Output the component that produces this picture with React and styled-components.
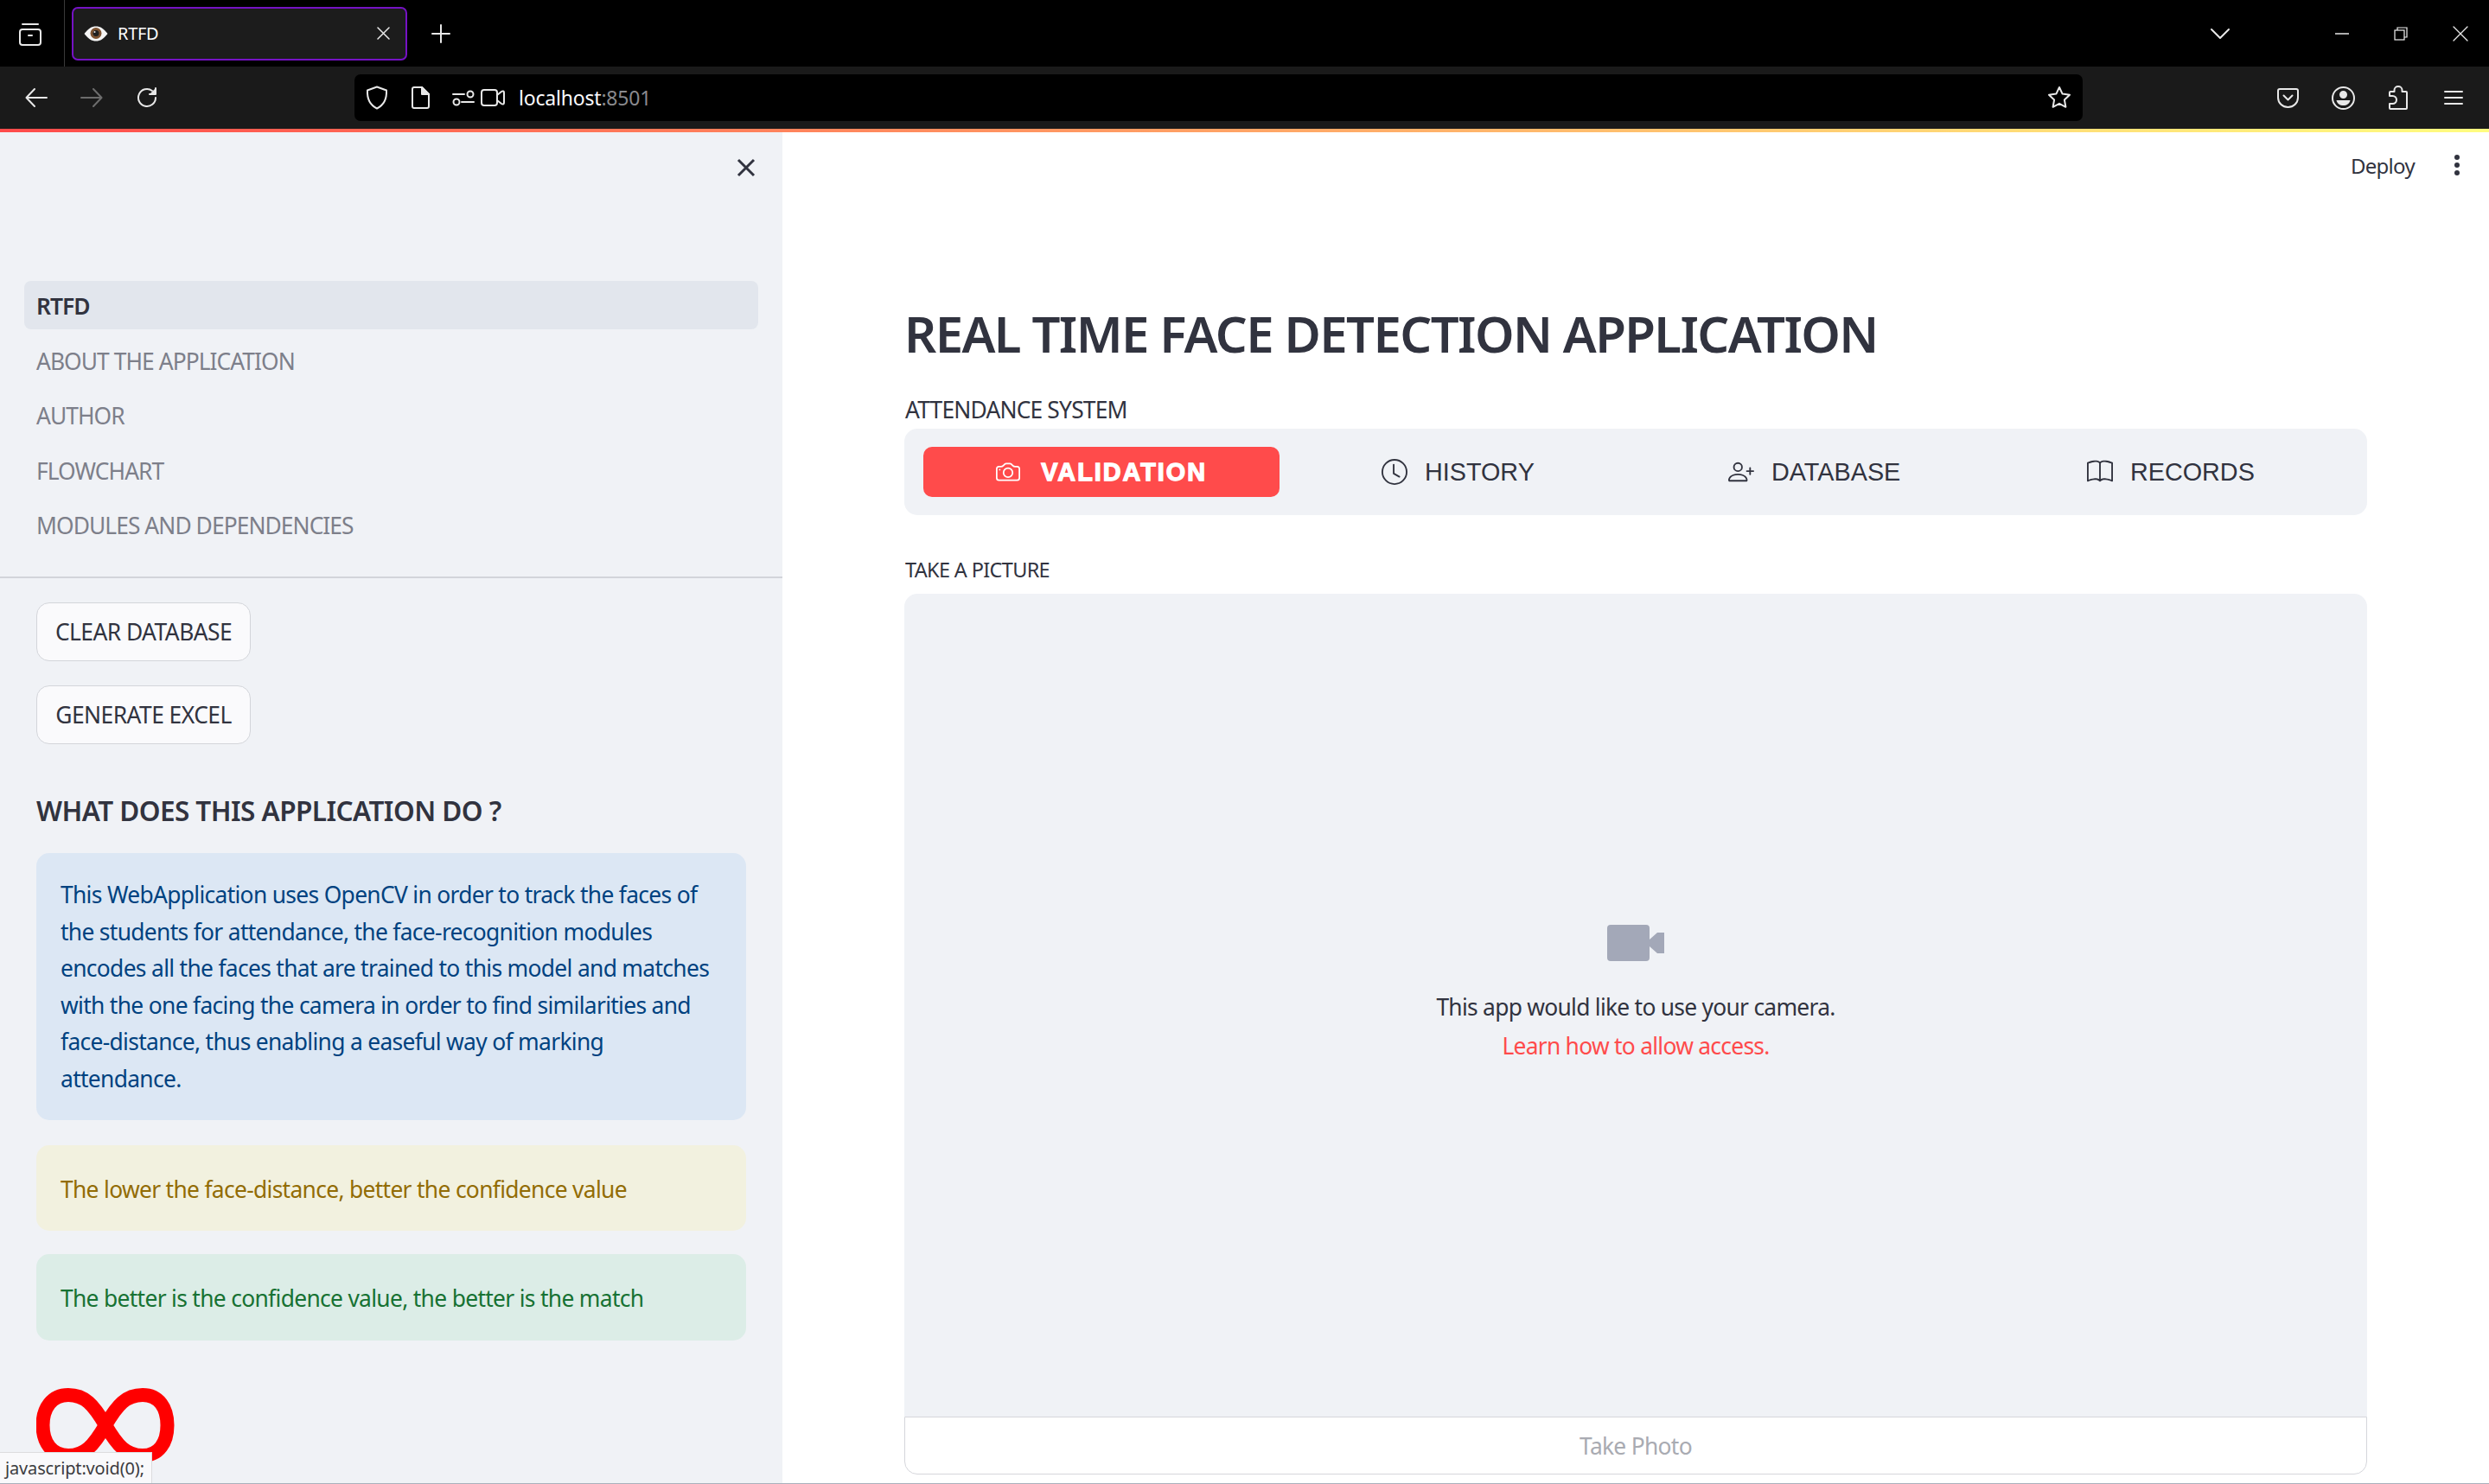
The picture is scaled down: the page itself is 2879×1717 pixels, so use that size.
import React from 'react';
import styled, { createGlobalStyle } from 'styled-components';
import { BsCamera, BsClock, BsPersonPlus, BsBook } from 'react-icons/bs';

const UI = `"Noto Sans", "Open Sans", sans-serif`;
const ARIAL = `"Liberation Sans", Arial, sans-serif`;

const Global = createGlobalStyle`
  html, body { margin: 0; padding: 0; background: #fff; overflow: hidden; }
  * { box-sizing: border-box; }
  #root { width: 2879px; height: 1717px; }
`;

const Shell = styled.div`
  position: relative;
  width: 2879px;
  height: 1717px;
  display: flex;
  flex-direction: column;
  overflow: hidden;
  font-family: ${UI};
  color: #31333f;
  border-bottom: 1px solid #aab0bb;
`;

/* browser chrome */
const TabStrip = styled.div`
  height: 77px;
  flex: none;
  background: #000;
  display: flex;
  align-items: center;
  color: #e8e8e8;
  padding-right: 24px;
`;
const TabListBtn = styled.div`
  width: 75px;
  height: 77px;
  padding-right: 4px;
  display: flex;
  align-items: center;
  justify-content: center;
  border-right: 1px solid #3a3a3a;
`;
const Tab = styled.div`
  width: 388px;
  height: 62px;
  margin-left: 8px;
  padding: 0 18px 0 12px;
  display: flex;
  align-items: center;
  background: #1c1c1c;
  border: 2px solid #7512c4;
  border-radius: 7px;
`;
const TabTitle = styled.span`
  flex: 1;
  margin-left: 11px;
  font-size: 20px;
  letter-spacing: -0.3px;
  color: #fbfbfe;
`;
const StripSpacer = styled.div`
  flex: 1;
`;
const StripIcon = styled.div`
  display: flex;
  align-items: center;
  justify-content: center;
  margin-left: ${p => p.$ml || 0}px;
  width: ${p => p.$w || 24}px;
`;
const NavBar = styled.div`
  height: 72px;
  flex: none;
  background: #1a1a1a;
  display: flex;
  align-items: center;
  padding-left: 28px;
  color: #e8e8e8;
`;
const NavIcon = styled.div`
  display: flex;
  width: 28px;
  margin-right: ${p => p.$mr || 0}px;
  margin-left: ${p => p.$ml || 0}px;
  justify-content: center;
  opacity: ${p => (p.$dim ? 0.4 : 1)};
`;
const UrlBar = styled.div`
  width: 1999px;
  height: 54px;
  margin-left: 226px;
  background: #000;
  border-radius: 7px;
  display: flex;
  align-items: center;
  padding: 0 13px 0 12px;
`;
const UrlText = styled.div`
  flex: 1;
  margin-left: 16px;
  font-size: 23px;
  letter-spacing: -0.2px;
  color: #fbfbfe;
  span { color: #8a8a8e; }
`;
const Rainbow = styled.div`
  height: 4px;
  flex: none;
  background: linear-gradient(90deg, #ff4b4b, #fffd80);
`;

/* streamlit page */
const Body = styled.div`
  flex: 1;
  min-height: 0;
  display: flex;
`;
const Sidebar = styled.aside`
  width: 905px;
  flex: none;
  background: #f0f2f6;
  overflow: hidden;
`;
const SideTop = styled.div`
  height: 172px;
  padding: 30px 31px 0 0;
  display: flex;
  justify-content: flex-end;
  align-items: flex-start;
`;
const PageNav = styled.nav`
  padding: 0 28px 32px;
  border-bottom: 2px solid #d2d4da;
  display: flex;
  flex-direction: column;
  gap: 7.5px;
`;
const PageLink = styled.div`
  height: 56px;
  padding: 2px 0 0 14px;
  display: flex;
  align-items: center;
  border-radius: 8px;
  font-size: 26.4px;
  letter-spacing: -0.95px;
  background: ${p => (p.$active ? '#e2e6ed' : 'transparent')};
  color: ${p => (p.$active ? '#31333f' : '#7d7f8a')};
  font-weight: ${p => (p.$active ? 600 : 400)};
`;
const SideBody = styled.div`
  padding: 28px 42px 0;
`;
const SideButton = styled.div`
  width: 248px;
  height: 68px;
  margin-bottom: 28px;
  display: flex;
  align-items: center;
  justify-content: center;
  background: #fafafc;
  border: 1.5px solid #d3d5da;
  border-radius: 15px;
  font-size: 26.4px;
  letter-spacing: -0.55px;
  white-space: nowrap;
`;
const SideHeading = styled.h3`
  margin: 52px 0 24px;
  height: 50px;
  line-height: 50px;
  font-size: 31.5px;
  font-weight: 600;
  letter-spacing: -0.55px;
  white-space: nowrap;
`;
const Alert = styled.div`
  height: ${p => p.$h}px;
  margin-bottom: ${p => p.$mb}px;
  padding: ${p => p.$top}px 28px 0;
  border-radius: 15px;
  font-size: 26.4px;
  letter-spacing: -0.68px;
  line-height: 42.6px;
  background: ${p => p.$bg};
  color: ${p => p.$fg};
`;
const LogoWrap = styled.div`
  margin-top: 54px;
  height: 88px;
  svg { display: block; }
`;
const StatusTip = styled.div`
  position: absolute;
  left: 0;
  bottom: 0;
  width: 176px;
  height: 36px;
  padding-left: 6px;
  display: flex;
  align-items: center;
  background: #f9f9fb;
  border: 1px solid #dcdcde;
  border-left: none;
  border-bottom: none;
  font-size: 20px;
  letter-spacing: -0.15px;
  color: #3c3c40;
  white-space: nowrap;
`;

const Main = styled.main`
  flex: 1;
  min-width: 0;
  background: #fff;
`;
const MainHead = styled.div`
  height: 76px;
  display: flex;
  align-items: center;
  justify-content: flex-end;
  padding-right: 34px;
`;
const Deploy = styled.div`
  font-size: 24px;
  letter-spacing: -0.7px;
  margin-right: 46px;
`;
const Kebab = styled.div`
  display: flex;
  flex-direction: column;
  gap: 3px;
  i { width: 6px; height: 6px; border-radius: 50%; background: #31333f; display: block; }
`;
const Content = styled.div`
  padding: 119px 141px 0;
`;
const Title = styled.h1`
  margin: 0 0 30px;
  height: 76px;
  line-height: 76px;
  font-size: 58px;
  font-weight: 600;
  letter-spacing: -1.6px;
  white-space: nowrap;
`;
const FieldLabel = styled.div`
  height: ${p => p.$h}px;
  line-height: ${p => p.$h}px;
  font-size: ${p => p.$size}px;
  letter-spacing: ${p => p.$ls}px;
  padding-left: 1px;
`;
const OptionMenu = styled.div`
  margin-top: 2px;
  height: 100px;
  padding: 21px 21px 0 22px;
  display: grid;
  grid-template-columns: repeat(4, 1fr);
  align-content: start;
  background: #f0f2f6;
  border-radius: 15px;
  margin-bottom: 45px;
`;
const OptionItem = styled.div`
  height: 58px;
  display: flex;
  align-items: center;
  justify-content: center;
  gap: ${p => (p.$active ? 24 : 20)}px;
  border-radius: 10px;
  font-family: ${ARIAL};
  font-size: 28.8px;
  font-weight: ${p => (p.$active ? 700 : 400)};
  letter-spacing: ${p => (p.$active ? 2 : 0)}px;
  -webkit-text-stroke: ${p => (p.$active ? '1.3px #fff' : '0')};
  background: ${p => (p.$active ? '#ff4b4b' : 'transparent')};
  color: ${p => (p.$active ? '#fff' : '#31333f')};
  svg { -webkit-text-stroke: 0; }
`;
const CameraBox = styled.div`
  margin-top: 10px;
  height: 952px;
  padding-bottom: 26px;
  display: flex;
  flex-direction: column;
  align-items: center;
  justify-content: center;
  background: #f0f2f6;
  border-radius: 15px 15px 0 0;
`;
const CameraText = styled.div`
  margin-top: ${p => p.$mt}px;
  height: 40px;
  line-height: 40px;
  font-size: 26.4px;
  letter-spacing: -0.73px;
  color: ${p => p.$color};
`;
const TakePhoto = styled.div`
  height: 67px;
  display: flex;
  align-items: center;
  justify-content: center;
  background: #fff;
  border: 1.5px solid #d5d6db;
  border-radius: 0 0 15px 15px;
  font-size: 26.4px;
  letter-spacing: -0.7px;
  color: #a9abb2;
`;

const Stroke = ({ w, h = w, vb, children, sw = 2 }) => (
  <svg width={w} height={h} viewBox={vb} fill="none" stroke="currentColor" strokeWidth={sw} strokeLinecap="round" strokeLinejoin="round">
    {children}
  </svg>
);

const pages = ['RTFD', 'ABOUT THE APPLICATION', 'AUTHOR', 'FLOWCHART', 'MODULES AND DEPENDENCIES'];
const options = [
  { label: 'VALIDATION', Icon: BsCamera, active: true },
  { label: 'HISTORY', Icon: BsClock },
  { label: 'DATABASE', Icon: BsPersonPlus },
  { label: 'RECORDS', Icon: BsBook },
];

export default function App() {
  return (
    <Shell>
      <Global />
      <TabStrip>
        <TabListBtn>
          <Stroke w={28} vb="0 0 28 28">
            <rect x="2" y="9" width="24" height="18" rx="3" />
            <path d="M5 3h18" />
            <path d="M12 16h4" />
          </Stroke>
        </TabListBtn>
        <Tab>
          <svg width="28" height="18" viewBox="0 0 28 18">
            <path d="M0.500 9C5 3 9 0.500 14 0.500S23 3 27.500 9C23 15 19 17.500 14 17.500S5 15 0.500 9z" fill="#f4f4f4" />
            <circle cx="14" cy="8.500" r="6.500" fill="#7d5230" />
            <circle cx="14" cy="8.500" r="3.500" fill="#1f1f1f" />
            <circle cx="12.500" cy="7" r="1" fill="#e8e8e8" />
          </svg>
          <TabTitle>RTFD</TabTitle>
          <Stroke w={15} vb="0 0 15 15" sw={1.5}><path d="M1 1l13 13M14 1L1 14" /></Stroke>
        </Tab>
        <StripIcon $ml={28} $w={22}>
          <Stroke w={22} vb="0 0 22 22"><path d="M11 1v20M1 11h20" /></Stroke>
        </StripIcon>
        <StripSpacer />
        <StripIcon $w={22}>
          <Stroke w={22} vb="0 0 22 12"><path d="M1 1l10 10L21 1" /></Stroke>
        </StripIcon>
        <StripIcon $ml={122} $w={16}>
          <Stroke w={16} vb="0 0 16 2" h={2} sw={1.3}><path d="M0 1h16" /></Stroke>
        </StripIcon>
        <StripIcon $ml={52} $w={16}>
          <svg width="16" height="16" viewBox="0 0 16 16" fill="none" stroke="#f0f0f0" strokeWidth="1.2">
            <rect x="1" y="4" width="11" height="11" />
            <path d="M4 4V1h11v11h-3" />
          </svg>
        </StripIcon>
        <StripIcon $ml={52} $w={18}>
          <Stroke w={18} vb="0 0 18 18" sw={1.3}><path d="M1 1l16 16M17 1L1 17" /></Stroke>
        </StripIcon>
      </TabStrip>

      <NavBar>
        <NavIcon $mr={36}>
          <Stroke w={26} vb="0 0 26 24"><path d="M25 12H2M11 2L1.5 12 11 22" /></Stroke>
        </NavIcon>
        <NavIcon $mr={36} $dim>
          <Stroke w={26} vb="0 0 26 24"><path d="M1 12h23M15 2l9.5 10L15 22" /></Stroke>
        </NavIcon>
        <NavIcon>
          <Stroke w={26} vb="0 0 26 26">
            <path d="M23 13a10 10 0 1 1-4-8" />
            <path d="M23 2v7h-7" fill="currentColor" />
          </Stroke>
        </NavIcon>
        <UrlBar>
          <NavIcon>
            <Stroke w={26} h={28} vb="0 0 26 28"><path d="M13 1.500l11 4c.5 9-2 16.500-11 21C4 22 1.500 14.500 2 5.500z" /></Stroke>
          </NavIcon>
          <NavIcon $ml={22}>
            <Stroke w={22} h={26} vb="0 0 22 26">
              <path d="M2 3a2 2 0 0 1 2-2h9l8 8v14a2 2 0 0 1-2 2H4a2 2 0 0 1-2-2z" />
              <path d="M13 1l8 8h-8z" fill="currentColor" />
            </Stroke>
          </NavIcon>
          <NavIcon $ml={22}>
            <Stroke w={26} h={19} vb="0 0 26 19">
              <circle cx="21" cy="5" r="3.500" />
              <path d="M1 5h13" />
              <circle cx="5" cy="14" r="3.500" />
              <path d="M11 14h14" />
            </Stroke>
          </NavIcon>
          <NavIcon $ml={6}>
            <Stroke w={28} h={20} vb="0 0 28 20">
              <rect x="1" y="1" width="18" height="18" rx="3" />
              <path d="M19 7l5-4c1.500-1 3-.5 3 1v12c0 1.500-1.500 2-3 1l-5-4" />
            </Stroke>
          </NavIcon>
          <UrlText>localhost<span>:8501</span></UrlText>
          <Stroke w={28} vb="0 0 28 28">
            <path d="M14 2l3.600 7.600 8.400 1.100-6.100 5.800 1.500 8.300L14 20.800l-7.400 4 1.500-8.300L2 10.700l8.400-1.100z" />
          </Stroke>
        </UrlBar>
        <NavIcon $ml={223}>
          <Stroke w={25} h={23} vb="0 0 25 23">
            <path d="M3 1h19a2 2 0 0 1 2 2v8c0 6-5 11-11.500 11S1 17 1 11V3a2 2 0 0 1 2-2z" />
            <path d="M7.500 8.500l5 5 5-5" />
          </Stroke>
        </NavIcon>
        <NavIcon $ml={36}>
          <Stroke w={27} vb="0 0 27 27">
            <circle cx="13.500" cy="13.500" r="12.500" />
            <circle cx="13.500" cy="9.500" r="3.500" fill="currentColor" />
            <path d="M5.500 16h16c-1 4-4 6-8 6s-7-2-8-6z" fill="currentColor" stroke="none" />
          </Stroke>
        </NavIcon>
        <NavIcon $ml={36}>
          <Stroke w={24} h={28} vb="0 0 24 28">
            <path d="M3 7h4.500V5a4.500 4 0 0 1 9 0v2H21a1 1 0 0 1 1 1v18a1 1 0 0 1-1 1H3a1 1 0 0 1-1-1v-5h3.500a4.500 4.500 0 0 0 0-9H2V8a1 1 0 0 1 1-1z" />
          </Stroke>
        </NavIcon>
        <NavIcon $ml={36}>
          <Stroke w={22} h={18} vb="0 0 22 18"><path d="M1 2h20M1 9h20M1 16h20" /></Stroke>
        </NavIcon>
      </NavBar>
      <Rainbow />

      <Body>
        <Sidebar>
          <SideTop>
            <svg width="22" height="22" viewBox="0 0 22 22" fill="none" stroke="#31333f" strokeWidth="3"><path d="M2 2l18 18M20 2L2 20" /></svg>
          </SideTop>
          <PageNav>
            {pages.map((p, i) => <PageLink key={p} $active={i === 0}>{p}</PageLink>)}
          </PageNav>
          <SideBody>
            <SideButton>CLEAR DATABASE</SideButton>
            <SideButton>GENERATE EXCEL</SideButton>
            <SideHeading>WHAT DOES THIS APPLICATION DO ?</SideHeading>
            <Alert $bg="#dce7f4" $fg="#004280" $h={309} $mb={29} $top={27}>
              This WebApplication uses OpenCV in order to track the faces of the students for attendance, the face-recognition modules encodes all the faces that are trained to this model and matches with the one facing the camera in order to find similarities and face-distance, thus enabling a easeful way of marking attendance.
            </Alert>
            <Alert $bg="#f2f1df" $fg="#926c05" $h={99} $mb={27} $top={30}>
              The lower the face-distance, better the confidence value
            </Alert>
            <Alert $bg="#dcede7" $fg="#177233" $h={100} $mb={0} $top={30}>
              The better is the confidence value, the better is the match
            </Alert>
            <LogoWrap>
              <svg width="160" height="88" viewBox="0 0 160 88" fill="none" stroke="#ff0000" strokeWidth="16">
                <path d="M80 44C66 20 56 9 37 9 18 9 7.500 24 7.500 44S18 79 37 79C56 79 66 68 80 44 94 20 104 9 123 9 142 9 151.500 24 151.500 44S142 79 123 79C104 79 94 68 80 44Z" />
              </svg>
            </LogoWrap>
          </SideBody>
        </Sidebar>

        <Main>
          <MainHead>
            <Deploy>Deploy</Deploy>
            <Kebab><i /><i /><i /></Kebab>
          </MainHead>
          <Content>
            <Title>REAL TIME FACE DETECTION APPLICATION</Title>
            <FieldLabel $h={40} $size={26.4} $ls={-0.83}>ATTENDANCE SYSTEM</FieldLabel>
            <OptionMenu>
              {options.map(({ label, Icon, active }) => (
                <OptionItem key={label} $active={active}>
                  <Icon size={active ? 28 : 30} />
                  <span>{label}</span>
                </OptionItem>
              ))}
            </OptionMenu>
            <FieldLabel $h={36} $size={23.5} $ls={-0.66}>TAKE A PICTURE</FieldLabel>
            <CameraBox>
              <svg width="66" height="42" viewBox="0 0 66 42" fill="#a3a8b8">
                <rect x="0" y="0" width="49" height="42" rx="4" />
                <path d="M49 17L58 9h8v24h-8l-9-8z" />
              </svg>
              <CameraText $mt={33} $color="#31333f">This app would like to use your camera.</CameraText>
              <CameraText $mt={5} $color="#ff4b4b">Learn how to allow access.</CameraText>
            </CameraBox>
            <TakePhoto>Take Photo</TakePhoto>
          </Content>
        </Main>
      </Body>
      <StatusTip>javascript:void(0);</StatusTip>
    </Shell>
  );
}
